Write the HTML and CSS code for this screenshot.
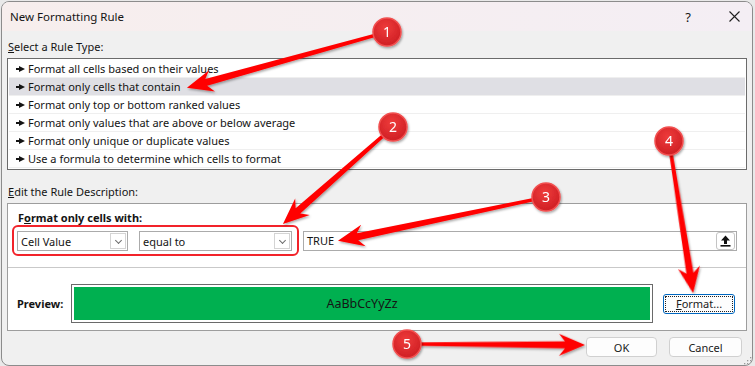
FILE: index.html
```html
<!DOCTYPE html>
<html lang="en">

<head>
  <meta charset="UTF-8">
  <title>New Formatting Rule</title>
  <link rel="stylesheet" href="styles.css">
</head>

<body>
  <div class="dialog">
    <div class="titlebar">
      <span class="title">New Formatting Rule</span>
      <span class="help">?</span>
      <span class="close">
        <svg width="11" height="11" viewBox="0 0 11 11"><path d="M0.5 0.5L10.5 10.5M10.5 0.5L0.5 10.5" stroke="#1f1f1f" stroke-width="1.1"/></svg>
      </span>
    </div>

    <div class="content">
      <div class="label"><u>S</u>elect a Rule Type:</div>
      <ul class="rule-list">
        <li><span class="bullet"></span>Format all cells based on their values</li>
        <li class="selected"><span class="bullet"></span>Format only cells that contain</li>
        <li><span class="bullet"></span>Format only top or bottom ranked values</li>
        <li><span class="bullet"></span>Format only values that are above or below average</li>
        <li><span class="bullet"></span>Format only unique or duplicate values</li>
        <li><span class="bullet"></span>Use a formula to determine which cells to format</li>
      </ul>

      <div class="label"><u>E</u>dit the Rule Description:</div>
      <div class="desc">
        <div class="desc-top">
          <div class="desc-title">F<u>o</u>rmat only cells with:</div>
          <div class="criteria">
            <div class="mark-box">
              <div class="combo combo-field">Cell Value<span class="drop"></span></div>
              <div class="combo combo-op">equal to<span class="drop"></span></div>
            </div>
            <div class="value-input">
              TRUE
              <span class="ref-btn">
                <svg width="11" height="12" viewBox="0 0 11 12"><path d="M5.5 0.5L10 5.5H7V9H4V5.5H1Z" fill="#111"/><rect x="0.5" y="10" width="10" height="1.6" fill="#111"/></svg>
              </span>
            </div>
          </div>
        </div>
        <div class="desc-bottom">
          <span class="preview-label">Preview:</span>
          <div class="preview">
            <div class="preview-fill">AaBbCcYyZz</div>
          </div>
          <button class="format-btn"><span><u>F</u>ormat...</span></button>
        </div>
      </div>

      <div class="actions">
        <button class="btn btn-ok">OK</button>
        <button class="btn btn-cancel">Cancel</button>
      </div>
    </div>

    <svg class="grip" width="9" height="9" viewBox="0 0 9 9">
      <rect x="7" y="1" width="1.3" height="1.3" fill="#9a9a9a"/>
      <rect x="4" y="4" width="1.3" height="1.3" fill="#9a9a9a"/>
      <rect x="7" y="4" width="1.3" height="1.3" fill="#9a9a9a"/>
      <rect x="1" y="7" width="1.3" height="1.3" fill="#9a9a9a"/>
      <rect x="4" y="7" width="1.3" height="1.3" fill="#9a9a9a"/>
      <rect x="7" y="7" width="1.3" height="1.3" fill="#9a9a9a"/>
    </svg>
  </div>

  <!-- callouts drawn over the dialog -->
  <svg class="callouts" width="755" height="366" viewBox="0 0 755 366">
    <defs>
      <filter id="shade" x="-20%" y="-20%" width="140%" height="140%">
        <feDropShadow dx="1" dy="1.5" stdDeviation="1.2" flood-color="#000" flood-opacity="0.35"/>
      </filter>
      <radialGradient id="dot" cx="45%" cy="35%" r="65%">
        <stop offset="0" stop-color="#ee3b3b"/>
        <stop offset="1" stop-color="#cf1f24"/>
      </radialGradient>
    </defs>

    <g fill="#ff0000" filter="url(#shade)">
      <g transform="translate(387 32) rotate(164.4)">
        <polygon points="0,-1.5 187.7,-3.5 181.7,-11 207.7,0 181.7,11 187.7,3.5 0,1.5"/>
      </g>
      <g transform="translate(393 127) rotate(138.6)">
        <polygon points="0,-1.5 126.7,-3.5 120.7,-11 146.7,0 120.7,11 126.7,3.5 0,1.5"/>
      </g>
      <g transform="translate(546 197) rotate(168.1)">
        <polygon points="0,-1.5 192.6,-3.5 186.6,-11 212.6,0 186.6,11 192.6,3.5 0,1.5"/>
      </g>
      <g transform="translate(669 141) rotate(81)">
        <polygon points="0,-1.5 133.9,-3.5 127.9,-11 153.9,0 127.9,11 133.9,3.5 0,1.5"/>
      </g>
      <g transform="translate(407 344) rotate(0.3)">
        <polygon points="0,-1.5 158,-3.5 152,-11 178,0 152,11 158,3.5 0,1.5"/>
      </g>
    </g>

    <g class="badge" filter="url(#shade)">
      <circle cx="387" cy="32" r="14"/>
      <circle cx="393" cy="127" r="14"/>
      <circle cx="546" cy="197" r="14"/>
      <circle cx="669" cy="141" r="14"/>
      <circle cx="407" cy="344" r="14"/>
    </g>
    <g class="badge-num">
      <text x="387" y="37">1</text>
      <text x="393" y="132">2</text>
      <text x="546" y="202">3</text>
      <text x="669" y="146">4</text>
      <text x="407" y="349">5</text>
    </g>
  </svg>
</body>

</html>
```

FILE: styles.css
```css
* {
  box-sizing: border-box;
}

html,
body {
  margin: 0;
  padding: 0;
}

body {
  position: relative;
  width: 755px;
  height: 366px;
  overflow: hidden;
  background-color: #e9e9e9;
  font-family: "Segoe UI", "Noto Sans", sans-serif;
  font-size: 11px;
  color: #141414;
}

.dialog {
  position: relative;
  width: 752px;
  height: 365px;
  margin: 1px 0 0 1px;
  border: 1px solid #8c8c8c;
  border-radius: 8px;
  overflow: hidden;
  background-color: #f0f0f0;
}

.titlebar {
  display: flex;
  align-items: center;
  height: 29px;
  padding-left: 8px;
  background: linear-gradient(90deg, #f7eeed, #f4eef4);
}

.title {
  flex: 1;
  font-size: 11.5px;
}

.help {
  width: 14px;
  margin-right: 34px;
  text-align: center;
  font-size: 13px;
}

.close {
  display: flex;
  margin-right: 12px;
}

.content {
  padding: 0 5px;
}

.label {
  height: 16px;
  line-height: 16px;
  margin-top: 8px;
  padding-left: 1px;
}

.label + .rule-list,
.label + .desc {
  margin-top: 3px;
}

.rule-list {
  list-style: none;
  margin: 0;
  padding: 1px;
  height: 112px;
  background-color: #fff;
  border: 1px solid #6b6b6b;
}

.rule-list li {
  display: flex;
  align-items: center;
  height: 18px;
  padding-left: 7px;
  border-bottom: 1px solid #efefef;
}

.rule-list li.selected {
  background-color: #dfdfe4;
}

.bullet {
  position: relative;
  width: 9px;
  height: 7px;
  margin-right: 3px;
}

.bullet::before {
  content: "";
  position: absolute;
  left: 0;
  top: 3px;
  width: 4px;
  height: 1.5px;
  background-color: #141414;
}

.bullet::after {
  content: "";
  position: absolute;
  left: 3px;
  top: 0.5px;
  border-left: 6px solid #141414;
  border-top: 3.2px solid transparent;
  border-bottom: 3.2px solid transparent;
}

.rule-list + .label {
  margin-top: 14px;
}

.desc {
  height: 128px;
  background-color: #fff;
  border: 1px solid #9d9d9d;
}

.desc-top {
  height: 64px;
  padding: 7px 0 0 4px;
  border-bottom: 1px solid #c9c9c9;
}

.desc-title {
  height: 14px;
  line-height: 14px;
  padding-left: 6px;
  font-weight: bold;
}

.criteria {
  display: flex;
  align-items: center;
}

.mark-box {
  display: flex;
  gap: 11px;
  height: 31px;
  padding: 4px 5px 3px 3px;
  border: 2px solid #f2232a;
  border-radius: 6px;
}

.combo {
  display: flex;
  align-items: center;
  height: 20px;
  padding-left: 3px;
  border: 1px solid #ababab;
}

.combo-field {
  width: 111px;
}

.combo-op {
  width: 153px;
}

.drop {
  margin-left: auto;
  margin-right: 1px;
  width: 16px;
  height: 16px;
  border: 1px solid #d4d4d4;
  position: relative;
}

.drop::after {
  content: "";
  position: absolute;
  left: 4.5px;
  top: 3.5px;
  width: 4px;
  height: 4px;
  border-right: 1px solid #6d6d6d;
  border-bottom: 1px solid #6d6d6d;
  transform: rotate(45deg);
}

.value-input {
  display: flex;
  align-items: center;
  width: 434px;
  height: 20px;
  margin-left: 4px;
  padding-left: 3px;
  border: 1px solid #ababab;
}

.ref-btn {
  display: flex;
  align-items: center;
  justify-content: center;
  margin-left: auto;
  margin-right: 1px;
  width: 19px;
  height: 18px;
  border: 1px solid #c4c4c4;
  border-radius: 3px;
}

.desc-bottom {
  display: flex;
  align-items: center;
  padding: 16px 0 0 9px;
}

.preview-label {
  width: 54px;
  font-weight: bold;
}

.preview {
  width: 582px;
  height: 39px;
  padding: 2px;
  border: 1px solid #6a6a6a;
}

.preview-fill {
  display: flex;
  align-items: center;
  justify-content: center;
  height: 100%;
  background-color: #00b050;
  font-size: 12.5px;
  color: #151515;
}

.format-btn {
  width: 72px;
  height: 20px;
  margin-left: 10px;
  padding: 1px;
  border: 1px solid #0067c0;
  border-radius: 3px;
  background-color: #fdfdfd;
  font: inherit;
  color: #1a1a1a;
}

.format-btn span {
  display: flex;
  align-items: center;
  justify-content: center;
  height: 100%;
  border: 1px dotted #222;
}

.actions {
  display: flex;
  justify-content: flex-end;
  gap: 12px;
  margin-top: 6px;
  padding-right: 5px;
}

.btn {
  height: 20px;
  padding: 0;
  border: 1px solid #d0d0d0;
  border-radius: 4px;
  background-color: #fdfdfd;
  font: inherit;
  color: #1a1a1a;
}

.btn-ok {
  width: 71px;
}

.btn-cancel {
  width: 73px;
}

.grip {
  position: absolute;
  right: 0;
  bottom: 0;
}

.callouts {
  position: absolute;
  top: 0;
  left: 0;
  pointer-events: none;
}

.badge circle {
  fill: url(#dot);
  stroke: #f25050;
  stroke-width: 1.5;
}

.badge-num text {
  fill: #fff;
  font-family: "Noto Sans", sans-serif;
  font-size: 14px;
  text-anchor: middle;
}
```
